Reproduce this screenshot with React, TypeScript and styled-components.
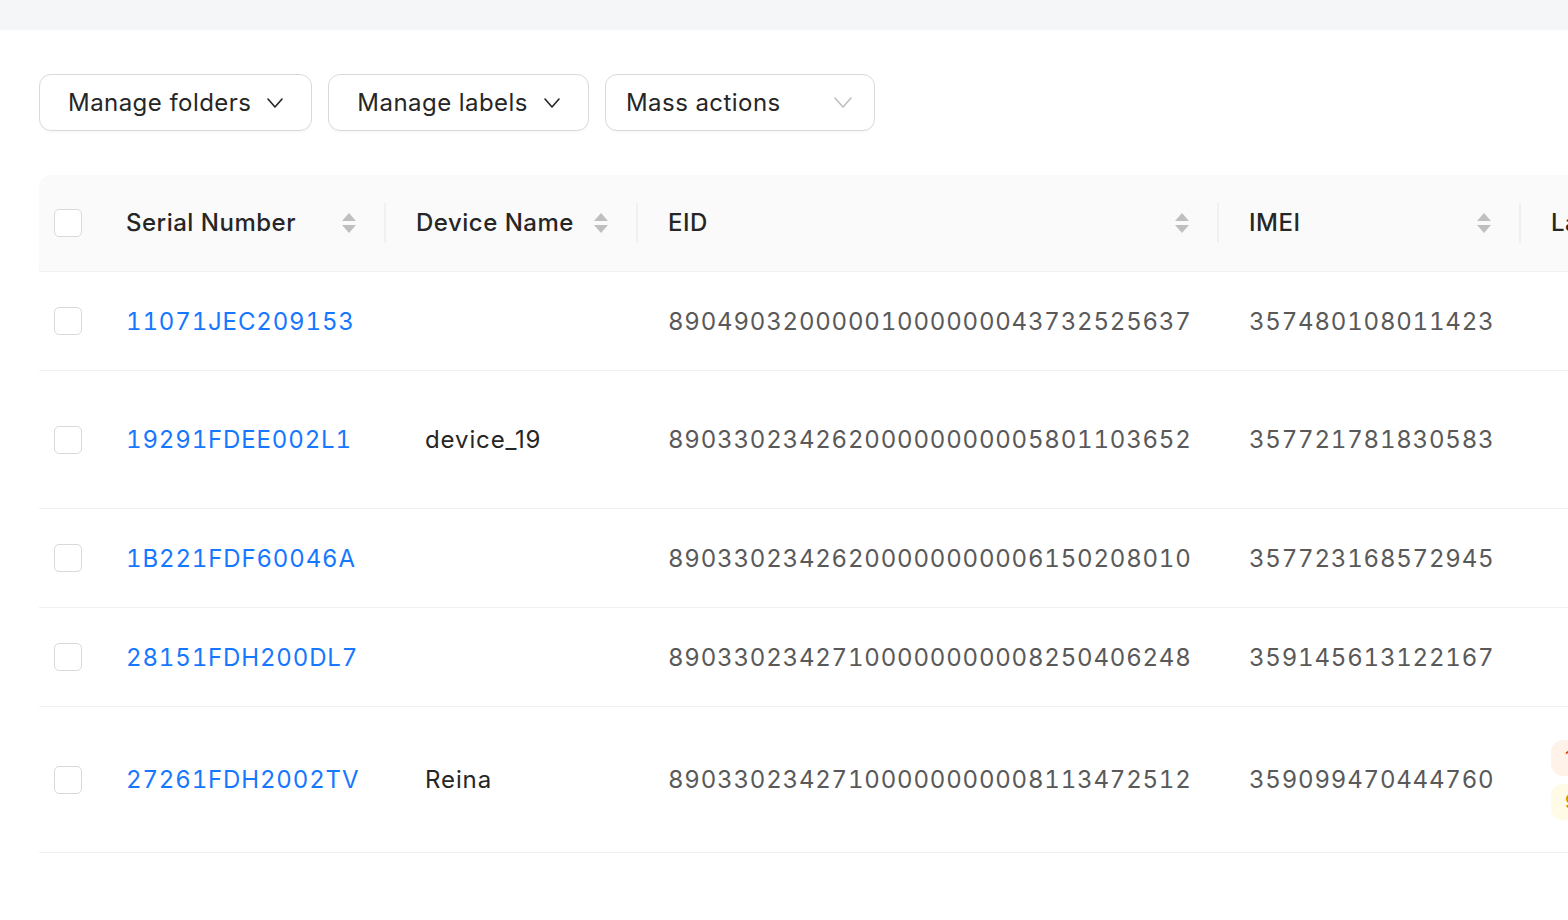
import React from 'react';
import styled, { createGlobalStyle } from 'styled-components';

const GlobalStyle = createGlobalStyle`
  html, body {
    margin: 0;
    padding: 0;
    background: #ffffff;
    overflow: hidden;
  }
  body {
    font-family: Inter, "Noto Sans", sans-serif;
    color: #262626;
  }
`;

const TopBar = styled.div`
  height: 30px;
  background: #f5f6f8;
`;

const Page = styled.main`
  padding: 44px 0 0 39px;
  width: 2200px;
`;

const Toolbar = styled.div`
  display: flex;
  gap: 16px;
  margin-bottom: 44px;
`;

const DropButton = styled.button<{ $width?: number; $muted?: boolean }>`
  display: flex;
  align-items: center;
  justify-content: space-between;
  gap: 16px;
  box-sizing: border-box;
  height: 57px;
  width: ${p => (p.$width ? `${p.$width}px` : 'auto')};
  padding: ${p => (p.$muted ? '0 22px 0 20px' : '0 28px')};
  background: #ffffff;
  border: 1px solid #d9d9d9;
  border-radius: 12px;
  font-family: Inter, "Noto Sans", sans-serif;
  font-size: 24px;
  letter-spacing: 0.45px;
  color: #262626;
  box-shadow: 0 2px 0 rgba(0, 0, 0, 0.02);

  svg {
    color: ${p => (p.$muted ? '#bfbfbf' : '#262626')};
    flex-shrink: 0;
  }
`;

const Table = styled.table<{ $width: number }>`
  width: ${p => p.$width}px;
  border-collapse: separate;
  border-spacing: 0;
  table-layout: fixed;
`;

const HeadCell = styled.th<{ $width: number }>`
  position: relative;
  width: ${p => p.$width}px;
  height: 97px;
  box-sizing: border-box;
  padding: 0 30px;
  background: #fafafa;
  border-bottom: 1px solid #f0f0f0;
  text-align: left;
  font-size: 24px;
  font-weight: 500;
  letter-spacing: 0.5px;
  color: #262626;
  white-space: nowrap;

  &:first-child {
    border-top-left-radius: 12px;
    padding: 0 0 0 15px;
  }

  &:nth-child(2) {
    padding-left: 16px;
  }
`;

const Divider = styled.span`
  position: absolute;
  right: 0;
  top: 50%;
  width: 2px;
  height: 40px;
  transform: translateY(-50%);
  background: #f0f0f0;
`;

const HeadInner = styled.div`
  display: flex;
  align-items: center;
  justify-content: space-between;
  padding-bottom: 1px;
`;

const Row = styled.tr<{ $height: number }>`
  height: ${p => p.$height}px;
`;

const Cell = styled.td<{ $indent?: number }>`
  box-sizing: border-box;
  padding: 0 16px 0 ${p => 30 + (p.$indent || 0)}px;
  border-bottom: 1px solid #f0f0f0;
  font-size: 24px;
  white-space: nowrap;
  overflow: hidden;
  vertical-align: middle;

  &:first-child {
    padding-left: 15px;
  }

  &:nth-child(2) {
    padding-left: 16px;
  }
`;

const Check = styled.span`
  display: block;
  width: 28px;
  height: 28px;
  box-sizing: border-box;
  border: 1px solid #d9d9d9;
  border-radius: 5px;
  background: #ffffff;
`;

const SerialLink = styled.a`
  color: #1677ff;
  text-decoration: none;
  letter-spacing: 0.85px;
  font-variant-numeric: tabular-nums;
`;

const Mono = styled.span`
  color: #595959;
  letter-spacing: 0.8px;
  font-variant-numeric: tabular-nums;
`;

const Name = styled.span`
  color: #262626;
  letter-spacing: 0.9px;
`;

const TagStack = styled.div`
  display: flex;
  flex-direction: column;
  gap: 8px;
`;

const Tag = styled.span<{ $tone: 'orange' | 'gold' }>`
  display: inline-block;
  width: fit-content;
  padding: 4px 14px;
  border-radius: 12px;
  font-size: 20px;
  line-height: 28px;
  background: ${p => (p.$tone === 'orange' ? '#fff2e8' : '#fffbe6')};
  color: ${p => (p.$tone === 'orange' ? '#d4380d' : '#d48806')};
`;

const Chevron = ({ w = 16 }: { w?: number }) => (
  <svg width={w} height={w / 2 + 2} viewBox={`0 0 ${w} ${w / 2 + 2}`} aria-hidden="true">
    <polyline
      points={`1,1 ${w / 2},${w / 2 + 1} ${w - 1},1`}
      fill="none"
      stroke="currentColor"
      strokeWidth="1.6"
      strokeLinecap="round"
      strokeLinejoin="round"
    />
  </svg>
);

const SortIcon = () => (
  <svg width="14" height="22" viewBox="0 0 14 22" aria-hidden="true">
    <path d="M7 1 L14 9 L0 9 Z" fill="#bfbfbf" />
    <path d="M0 13 L14 13 L7 21 Z" fill="#bfbfbf" />
  </svg>
);

const columns = [
  { key: 'check', width: 71 },
  { key: 'serial', width: 276, title: 'Serial Number', divider: true },
  { key: 'name', width: 252, title: 'Device Name', divider: true },
  { key: 'eid', width: 581, title: 'EID', divider: true },
  { key: 'imei', width: 302, title: 'IMEI', divider: true },
  { key: 'labels', width: 300, title: 'Labels' },
];

const tableWidth = columns.reduce((sum, c) => sum + c.width, 0);

const rows = [
  { serial: '11071JEC209153', name: '', eid: '89049032000001000000043732525637', imei: '357480108011423', height: 99 },
  { serial: '19291FDEE002L1', name: 'device_19', eid: '89033023426200000000005801103652', imei: '357721781830583', height: 138 },
  { serial: '1B221FDF60046A', name: '', eid: '89033023426200000000006150208010', imei: '357723168572945', height: 99 },
  { serial: '28151FDH200DL7', name: '', eid: '89033023427100000000008250406248', imei: '359145613122167', height: 99 },
  { serial: '27261FDH2002TV', name: 'Reina', eid: '89033023427100000000008113472512', imei: '359099470444760', height: 146, tags: true },
];

const App: React.FC = () => (
  <>
    <GlobalStyle />
    <TopBar />
    <Page>
      <Toolbar>
        <DropButton>
          Manage folders
          <Chevron />
        </DropButton>
        <DropButton>
          Manage labels
          <Chevron />
        </DropButton>
        <DropButton $width={270} $muted>
          Mass actions
          <Chevron w={18} />
        </DropButton>
      </Toolbar>

      <Table $width={tableWidth}>
        <thead>
          <tr>
            {columns.map(col => (
              <HeadCell key={col.key} $width={col.width}>
                {col.key === 'check' ? (
                  <Check />
                ) : (
                  <HeadInner>
                    <span>{col.title}</span>
                    {col.key !== 'labels' && <SortIcon />}
                  </HeadInner>
                )}
                {col.divider && <Divider />}
              </HeadCell>
            ))}
          </tr>
        </thead>
        <tbody>
          {rows.map(row => (
            <Row key={row.serial} $height={row.height}>
              <Cell>
                <Check />
              </Cell>
              <Cell>
                <SerialLink href="#">{row.serial}</SerialLink>
              </Cell>
              <Cell $indent={9}>
                <Name>{row.name}</Name>
              </Cell>
              <Cell>
                <Mono>{row.eid}</Mono>
              </Cell>
              <Cell>
                <Mono>{row.imei}</Mono>
              </Cell>
              <Cell>
                {row.tags && (
                  <TagStack>
                    <Tag $tone="orange">1 expiring</Tag>
                    <Tag $tone="gold">9 pending</Tag>
                  </TagStack>
                )}
              </Cell>
            </Row>
          ))}
        </tbody>
      </Table>
    </Page>
  </>
);

export default App;
